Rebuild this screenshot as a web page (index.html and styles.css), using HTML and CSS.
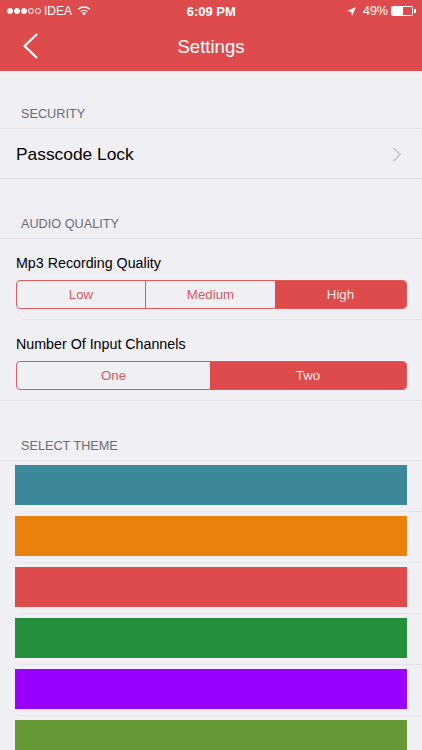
FILE: index.html
```html
<!DOCTYPE html>
<html lang="en">
<head>
<meta charset="utf-8">
<title>Settings</title>
<link rel="stylesheet" href="styles.css">
</head>
<body>
<div class="screen">
  <header class="nav">
    <div class="status">
      <div class="status-left">
        <span class="dots"><i class="dot on"></i><i class="dot on"></i><i class="dot on"></i><i class="dot"></i><i class="dot"></i></span>
        <span class="carrier">IDEA</span>
        <svg class="wifi" width="14" height="10" viewBox="0 0 14 10"><path d="M7 9.6 4.9 7.2a3 3 0 0 1 4.2 0z" fill="#fff"/><path d="M3.6 5.7a5 5 0 0 1 6.8 0M1.3 3.3a8.4 8.4 0 0 1 11.4 0" fill="none" stroke="#fff" stroke-width="1.4"/></svg>
      </div>
      <div class="clock">6:09 PM</div>
      <div class="status-right">
        <svg class="loc" width="9" height="9" viewBox="0 0 9 9"><path d="M9 0 0 4l4.2.8L5 9z" fill="#fff"/></svg>
        <span class="pct">49%</span>
        <span class="battery"><span class="battery-fill"></span></span>
        <span class="battery-tip"></span>
      </div>
    </div>
    <div class="bar">
      <svg class="back" width="17" height="26" viewBox="0 0 17 26"><path d="M15 1 2.6 13 15 25" fill="none" stroke="#fff" stroke-width="2.2"/></svg>
      <h1 class="title">Settings</h1>
    </div>
  </header>

  <h2 class="section-head first">SECURITY</h2>
  <div class="link-row">
    <span>Passcode Lock</span>
    <svg class="chev" width="10" height="15" viewBox="0 0 10 15"><path d="M1.5 1 8 7.5 1.5 14" fill="none" stroke="#c7c7cc" stroke-width="1.5"/></svg>
  </div>

  <h2 class="section-head">AUDIO QUALITY</h2>
  <div class="option inset">
    <div class="option-label">Mp3 Recording Quality</div>
    <div class="segments">
      <div class="seg seg-low">Low</div>
      <div class="seg seg-med">Medium</div>
      <div class="seg seg-high active">High</div>
    </div>
  </div>
  <div class="option last">
    <div class="option-label">Number Of Input Channels</div>
    <div class="segments">
      <div class="seg seg-half-a">One</div>
      <div class="seg seg-half-b active">Two</div>
    </div>
  </div>

  <h2 class="section-head">SELECT THEME</h2>
  <div class="themes">
    <div class="theme"><div class="swatch teal"></div></div>
    <div class="theme"><div class="swatch orange"></div></div>
    <div class="theme"><div class="swatch red"></div></div>
    <div class="theme"><div class="swatch green"></div></div>
    <div class="theme"><div class="swatch purple"></div></div>
    <div class="theme"><div class="swatch olive"></div></div>
  </div>
</div>
</body>
</html>
```
FILE: styles.css
```css
* { box-sizing: border-box; }
html, body { margin: 0; padding: 0; }
body { background: #efeff4; font-family: "Liberation Sans", Arial, sans-serif; overflow: hidden; }
.screen { width: 422px; height: 750px; overflow: hidden; background: #efeff4; }

.nav { height: 71px; background: #de4b4c; color: #fff; }
.status { height: 22px; display: grid; grid-template-columns: 1fr auto 1fr; align-items: center; padding: 0 6.5px 0 7px; font-size: 12px; }
.status-left { display: flex; align-items: center; }
.dots { display: flex; gap: 1px; }
.dot { width: 6px; height: 6px; border-radius: 50%; border: 0.7px solid #fff; }
.dot.on { background: #fff; }
.carrier { margin-left: 3px; }
.wifi { margin-left: 5px; }
.clock { font-weight: 700; font-size: 13px; }
.status-right { display: flex; align-items: center; justify-content: flex-end; }
.loc { margin-right: 7px; }
.pct { font-size: 12.5px; }
.battery { margin-left: 3px; width: 22px; height: 10px; border: 1px solid #fff; display: block; border-radius: 1.5px; }
.battery-fill { display: block; width: 11px; height: 100%; background: #fff; }
.battery-tip { width: 1.5px; height: 4px; background: #fff; margin-left: 1px; }
.bar { height: 49px; display: flex; align-items: center; justify-content: center; position: relative; padding-top: 1px; }
.back { position: absolute; left: 22px; top: 11px; }
.title { margin: 0; font-size: 18.6px; font-weight: 400; }

.section-head { margin: 0; font-size: 12.7px; line-height: 16px; font-weight: 400; color: #6d6d72; border-bottom: 1px solid #e1e1e6; padding: 35px 21px 0; height: 58px; }
.section-head:not(.first) { height: 60px; padding-top: 37px; }

.link-row { height: 50px; display: flex; align-items: center; justify-content: space-between; padding: 1px 20px 0 16px; font-size: 17.35px; color: #000; border-bottom: 1px solid #e1e1e6; }

.option { height: 81px; padding: 16px 15px 0 16px; position: relative; }
.option.inset::after { content: ""; position: absolute; left: 21px; right: 0; bottom: 0; height: 1px; background: #e1e1e6; }
.option.last { border-bottom: 1px solid #e1e1e6; }
.option-label { font-size: 14.25px; line-height: 17px; color: #000; margin-bottom: 8px; }
.segments { display: flex; height: 29px; border: 1px solid #e0595b; border-radius: 4px; overflow: hidden; }
.seg { display: flex; align-items: center; justify-content: center; font-size: 13.3px; color: #d9585a; }
.seg-low { width: 129px; border-right: 1px solid #e0595b; }
.seg-med { width: 129px; }
.seg-high { flex: 1; }
.seg-half-a { width: 193px; }
.seg-half-b { flex: 1; }
.seg.active { background: #de4b4c; color: #f8e6e6; }

.themes { display: flex; flex-direction: column; }
.theme { height: 51px; padding: 4px 15px 0; position: relative; }
.theme::after { content: ""; position: absolute; left: 21px; right: 0; bottom: 0; height: 1px; background: #e4e4e9; }
.swatch { height: 40px; }
.teal { background: #3d879b; }
.orange { background: #e8820c; }
.red { background: #de4b4c; }
.green { background: #27903d; }
.purple { background: #9900fd; }
.olive { background: #669836; }
```
